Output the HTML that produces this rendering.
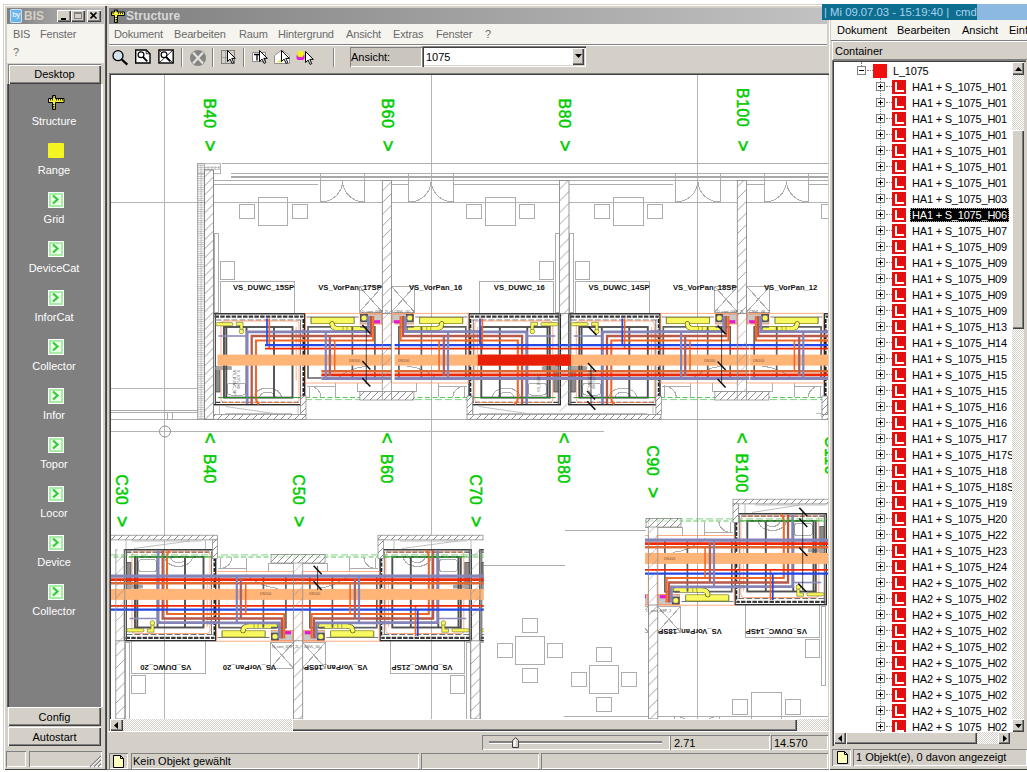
<!DOCTYPE html>
<html><head><meta charset="utf-8"><title>BIS Structure</title>
<style>
html,body{margin:0;padding:0;}
body{width:1027px;height:772px;position:relative;overflow:hidden;background:#fff;font-family:"Liberation Sans",sans-serif;font-size:11px;color:#000;}
.a{position:absolute;}
.t{position:absolute;white-space:nowrap;line-height:13px;height:13px;}
.face{background:#d4d0c8;}
.raised{box-shadow:inset 1px 1px 0 #fff,inset -1px -1px 0 #404040,inset -2px -2px 0 #808080;}
.sunk{box-shadow:inset 1px 1px 0 #808080,inset -1px -1px 0 #fff;}
.sunk2{box-shadow:inset 1px 1px 0 #808080,inset -1px -1px 0 #fff,inset 2px 2px 0 #404040,inset -2px -2px 0 #d4d0c8;}
.btn{position:absolute;background:#d4d0c8;box-shadow:inset 1px 1px 0 #fff,inset -1px -1px 0 #404040,inset -2px -2px 0 #808080;}
.dither{background-image:conic-gradient(#fff 25%,#d4d0c8 0 50%,#fff 0 75%,#d4d0c8 0);background-size:2px 2px;}
.mg{color:#6a6a6a;letter-spacing:-0.15px;}
.wl{color:#fff;text-align:center;width:92px;left:8px;}
.row{position:absolute;left:0;height:16px;width:178px;}
.pm{position:absolute;left:42px;top:3px;width:7px;height:7px;border:1px solid #808080;background:#fff;}
.pm:before{content:"";position:absolute;left:1px;top:3px;width:5px;height:1px;background:#000;}
.pm.p:after{content:"";position:absolute;left:3px;top:1px;width:1px;height:5px;background:#000;}
.li{position:absolute;left:58px;top:1px;width:14px;height:14px;background:#e41010;}
.li:before{content:"";position:absolute;left:3px;top:2px;width:2px;height:10px;background:#fff;}
.li:after{content:"";position:absolute;left:3px;top:10px;width:9px;height:2px;background:#fff;}
.lb{position:absolute;left:78px;top:1px;line-height:14px;height:14px;white-space:nowrap;padding:0 2px;letter-spacing:-0.2px;}
.sel{background:#000;color:#fff;outline:1px dotted #aaa;outline-offset:-1px;}
.gi{position:absolute;left:48px;width:16px;height:16px;background:#fff;}
.gi:before{content:"";position:absolute;left:1px;top:1px;width:10px;height:10px;border:2px solid #a8eca8;background:#e8ffe8;}
</style></head><body>

<div class="a face" style="left:3px;top:4px;width:104px;height:766px;box-shadow:inset 1px 1px 0 #d4d0c8,inset 2px 2px 0 #fff,inset -1px -1px 0 #404040,inset -2px -1px 0 #585858;"></div>
<div class="a " style="left:7px;top:8px;width:97px;height:16px;background:linear-gradient(90deg,#808080,#c0c0c0);"></div>
<div class="a " style="left:10px;top:9px;width:12px;height:14px;background:#6db4e8;border-radius:2px;box-shadow:inset 0 0 0 1px #c8e4fa;color:#fff;font-size:8px;line-height:12px;text-align:center;letter-spacing:-0.5px;">by</div>
<div class="t " style="left:24px;top:9.5px;font-weight:bold;font-size:12px;color:#d4d0c8;">BIS</div>
<div class="a btn" style="left:57px;top:10px;width:14px;height:12px;"></div>
<div class="a btn" style="left:71px;top:10px;width:14px;height:12px;"></div>
<div class="a btn" style="left:87px;top:10px;width:14px;height:12px;"></div>
<div class="a " style="left:61px;top:18px;width:5px;height:2px;background:#000;"></div>
<div class="a " style="left:74px;top:12px;width:8px;height:7px;box-sizing:border-box;border:1px solid #808080;border-top:2px solid #808080;"></div>
<svg class="a" style="left:90px;top:12px" width="8" height="8" viewBox="0 0 8 8"><path d="M0.5 0.5 L6.5 6.5 M6.5 0.5 L0.5 6.5" stroke="#000" stroke-width="1.6"/></svg>
<div class="a " style="left:7px;top:24px;width:97px;height:39px;background:#f5f4ee;"></div>
<div class="t mg" style="left:13px;top:28.0px;">BIS</div>
<div class="t mg" style="left:40px;top:28.0px;">Fenster</div>
<div class="t mg" style="left:13px;top:45.5px;">?</div>
<div class="a face" style="left:8px;top:64px;width:93px;height:20px;box-shadow:inset 1px 1px 0 #808080,inset 2px 2px 0 #fff,inset -1px -1px 0 #404040,inset -2px -2px 0 #808080;"></div>
<div class="t " style="left:8px;top:67.5px;width:93px;text-align:center;">Desktop</div>
<div class="a " style="left:7px;top:84px;width:96px;height:623px;background:#fff;"></div>
<div class="a " style="left:7px;top:84px;width:94px;height:623px;background:#808080;box-shadow:inset 1px 0 0 #606060,inset 2px 0 0 #404040;"></div>
<div class="t wl" style="left:8px;top:114.5px;">Structure</div>
<svg class="a" style="left:46px;top:92px" width="20" height="20" viewBox="0 0 20 20"><path d="M2.5 6.5 h4 v-3 h3 v3 h8.500 v4 h-8.500 v7 h-3 v-7 h-4 z" fill="#f4f040" stroke="#000" stroke-width="1"/><path d="M4.5 7v1.500M6.500 7v1.500M10.500 7v1.500M12.500 7v1.500M14.500 7v1.500M16.500 7v1.500M7 5h1.500M7 12.500h1.500M7 14.500h1.500M7 16h1.500" stroke="#000" stroke-width="0.8"/></svg>
<div class="t wl" style="left:8px;top:163.5px;">Range</div>
<div class="a " style="left:48px;top:143px;width:16px;height:15px;background:#f4f420;border-radius:1px;"></div>
<div class="t wl" style="left:8px;top:212.5px;">Grid</div>
<div class="gi" style="top:192px"></div><svg class="a" style="left:48px;top:192px" width="16" height="16" viewBox="0 0 16 16"><path d="M5 3.500 L9.500 7.500 L5 11.500" fill="none" stroke="#38c838" stroke-width="2.200"/></svg>
<div class="t wl" style="left:8px;top:261.5px;">DeviceCat</div>
<div class="gi" style="top:241px"></div><svg class="a" style="left:48px;top:241px" width="16" height="16" viewBox="0 0 16 16"><path d="M5 3.500 L9.500 7.500 L5 11.500" fill="none" stroke="#38c838" stroke-width="2.200"/></svg>
<div class="t wl" style="left:8px;top:310.5px;">InforCat</div>
<div class="gi" style="top:290px"></div><svg class="a" style="left:48px;top:290px" width="16" height="16" viewBox="0 0 16 16"><path d="M5 3.500 L9.500 7.500 L5 11.500" fill="none" stroke="#38c838" stroke-width="2.200"/></svg>
<div class="t wl" style="left:8px;top:359.5px;">Collector</div>
<div class="gi" style="top:339px"></div><svg class="a" style="left:48px;top:339px" width="16" height="16" viewBox="0 0 16 16"><path d="M5 3.500 L9.500 7.500 L5 11.500" fill="none" stroke="#38c838" stroke-width="2.200"/></svg>
<div class="t wl" style="left:8px;top:408.5px;">Infor</div>
<div class="gi" style="top:388px"></div><svg class="a" style="left:48px;top:388px" width="16" height="16" viewBox="0 0 16 16"><path d="M5 3.500 L9.500 7.500 L5 11.500" fill="none" stroke="#38c838" stroke-width="2.200"/></svg>
<div class="t wl" style="left:8px;top:457.5px;">Topor</div>
<div class="gi" style="top:437px"></div><svg class="a" style="left:48px;top:437px" width="16" height="16" viewBox="0 0 16 16"><path d="M5 3.500 L9.500 7.500 L5 11.500" fill="none" stroke="#38c838" stroke-width="2.200"/></svg>
<div class="t wl" style="left:8px;top:506.5px;">Locor</div>
<div class="gi" style="top:486px"></div><svg class="a" style="left:48px;top:486px" width="16" height="16" viewBox="0 0 16 16"><path d="M5 3.500 L9.500 7.500 L5 11.500" fill="none" stroke="#38c838" stroke-width="2.200"/></svg>
<div class="t wl" style="left:8px;top:555.5px;">Device</div>
<div class="gi" style="top:535px"></div><svg class="a" style="left:48px;top:535px" width="16" height="16" viewBox="0 0 16 16"><path d="M5 3.500 L9.500 7.500 L5 11.500" fill="none" stroke="#38c838" stroke-width="2.200"/></svg>
<div class="t wl" style="left:8px;top:604.5px;">Collector</div>
<div class="gi" style="top:584px"></div><svg class="a" style="left:48px;top:584px" width="16" height="16" viewBox="0 0 16 16"><path d="M5 3.500 L9.500 7.500 L5 11.500" fill="none" stroke="#38c838" stroke-width="2.200"/></svg>
<div class="a btn" style="left:8px;top:707px;width:93px;height:19px;"></div>
<div class="t " style="left:8px;top:710.8px;width:93px;text-align:center;">Config</div>
<div class="a btn" style="left:8px;top:727px;width:93px;height:19px;"></div>
<div class="t " style="left:8px;top:730.8px;width:93px;text-align:center;">Autostart</div>
<div class="a sunk" style="left:6px;top:751px;width:20px;height:16px;"></div>
<div class="a sunk" style="left:29px;top:751px;width:73px;height:16px;"></div>
<svg class="a" style="left:89px;top:755px" width="13" height="13" viewBox="0 0 13 13"><path d="M12 1 L1 12 M12 5 L5 12 M12 9 L9 12" stroke="#808080" stroke-width="1.200"/><path d="M12 2.200 L2.200 12 M12 6.200 L6.200 12 M12 10.200 L10.200 12" stroke="#fff" stroke-width="1"/></svg>
<div class="a face" style="left:107px;top:4px;width:723px;height:766px;box-shadow:inset 0 1px 0 #d4d0c8,inset 0 2px 0 #fff,inset -1px -1px 0 #808080;"></div>
<div class="a " style="left:109px;top:8px;width:718px;height:16px;background:linear-gradient(90deg,#808080,#c2c2c2);"></div>
<svg class="a" style="left:110px;top:8px" width="16" height="16" viewBox="0 0 16 16"><path d="M1.500 4 h3 v-2 h3 v2 h7 v3.500 h-7 v7 h-3 v-7 h-3 z" fill="#f4f040" stroke="#000" stroke-width="1"/><path d="M3 4.500v1.700M8.500 4.500v1.700M10.500 4.500v1.700M12.500 4.500v1.700M5.500 3h1.500M5.500 9.500h1.500M5.500 11.500h1.500M5.500 13h1.500" stroke="#000" stroke-width="0.800"/></svg>
<div class="t " style="left:126px;top:9.5px;font-weight:bold;font-size:12px;color:#d8d8d8;letter-spacing:0.1px;">Structure</div>
<div class="a " style="left:109px;top:24px;width:718px;height:20px;background:#f5f4ee;"></div>
<div class="t mg" style="left:114px;top:27.5px;">Dokument</div>
<div class="t mg" style="left:174px;top:27.5px;">Bearbeiten</div>
<div class="t mg" style="left:239px;top:27.5px;">Raum</div>
<div class="t mg" style="left:278px;top:27.5px;">Hintergrund</div>
<div class="t mg" style="left:346px;top:27.5px;">Ansicht</div>
<div class="t mg" style="left:393px;top:27.5px;">Extras</div>
<div class="t mg" style="left:436px;top:27.5px;">Fenster</div>
<div class="t mg" style="left:485px;top:27.5px;">?</div>
<div class="a " style="left:109px;top:44px;width:718px;height:1px;background:#808080;"></div>
<div class="a " style="left:109px;top:45px;width:718px;height:1px;background:#fff;"></div>
<svg class="a" style="left:108px;top:46px" width="240" height="27" viewBox="108 46 240 27">
<circle cx="118" cy="55.700" r="5" fill="#d8e4ec" stroke="#000" stroke-width="1.300"/><path d="M121.800 59.500 L127.300 64.600" stroke="#000" stroke-width="2.200"/>
<path d="M135.700 50 h10.500 l3.800 3.800 v9.200 h-14.300 z" fill="#fff" stroke="#000" stroke-width="1.400"/><path d="M146.200 50 v3.800 h3.800" fill="none" stroke="#000" stroke-width="0.800"/><circle cx="141" cy="54.800" r="2.900" fill="#fff" stroke="#000" stroke-width="1.200"/><path d="M143 57 L147.300 61.300" stroke="#000" stroke-width="1.800"/>
<rect x="158.900" y="50" width="14.300" height="13" fill="#fff" stroke="#000" stroke-width="1.400"/><path d="M159 50 L173 63 M173 50 L159 63" stroke="#000" stroke-width="0.800"/><circle cx="164" cy="54.800" r="2.900" fill="#fff" stroke="#000" stroke-width="1.200"/><path d="M166 57 L170.300 61.300" stroke="#000" stroke-width="1.800"/>
<path d="M181.500 48 v19" stroke="#808080"/><path d="M182.500 48 v19" stroke="#fff"/>
<circle cx="198" cy="58" r="8" fill="#858585"/><path d="M193 52.500 L203 63.500 M203 52.500 L193 63.500" stroke="#e4e2dc" stroke-width="2.200"/>
<path d="M212.500 48 v19" stroke="#808080"/><path d="M213.500 48 v19" stroke="#fff"/>
<rect x="221.500" y="50.500" width="13" height="13" fill="none" stroke="#808080"/><path d="M221.500 57.500 h6 M225.500 50.500 v13" stroke="#909090" stroke-width="0.800" fill="none"/>
<g id="cur"><path d="M227.500 50.500 v11 l2.600 -2.400 l2 4.300 l1.700 -0.800 l-2 -4.200 h3.500 z" fill="#fff" stroke="#000" stroke-width="1"/></g>
<path d="M243.500 48 v19" stroke="#808080"/><path d="M244.500 48 v19" stroke="#fff"/>
<rect x="252.500" y="52.500" width="13" height="9" fill="#fff" stroke="#909090"/><path d="M254 54.500 h6 M257 54.500 v6" stroke="#000" stroke-width="1.300"/>
<use href="#cur" x="32" y="0"/>
<path d="M274.500 63.500 v-8 l7.500 -5.500 l7.500 5.500 v8 z" fill="#fff" stroke="#909090"/><path d="M276 62.500 l6 -4 v4 z" fill="#e8e860"/>
<use href="#cur" x="54" y="0"/>
<rect x="296.500" y="54" width="8" height="6" rx="2" fill="#e020d0"/><circle cx="300.500" cy="54" r="3.300" fill="#f4f020"/>
<use href="#cur" x="78" y="1"/>
<path d="M333.500 48 v19" stroke="#808080"/><path d="M334.500 48 v19" stroke="#fff"/>
</svg>
<div class="a " style="left:350px;top:47px;width:72px;height:20px;background:#cac6be;box-shadow:inset 1px 1px 0 #808080,inset -1px -1px 0 #fff;"></div>
<div class="t " style="left:351px;top:50.5px;">Ansicht:</div>
<div class="a " style="left:422px;top:46px;width:164px;height:21px;background:#fff;box-shadow:inset 1px 1px 0 #808080,inset 2px 2px 0 #404040,inset -1px -1px 0 #fff,inset -2px -2px 0 #d4d0c8;"></div>
<div class="t " style="left:426px;top:50.5px;">1075</div>
<div class="a btn" style="left:572px;top:48px;width:12px;height:17px;"></div>
<svg class="a" style="left:575px;top:54px" width="7" height="4" viewBox="0 0 7 4"><path d="M0 0 h7 l-3.500 4 z" fill="#000"/></svg>
<div class="a " style="left:109px;top:73px;width:720px;height:660px;background:#d4d0c8;box-shadow:inset 1px 1px 0 #808080,inset 2px 2px 0 #404040;"></div>
<div class="a " style="left:111px;top:75px;width:717px;height:644px;background:#fff;"></div>
<svg class="a" style="left:111px;top:75px" width="717" height="644" viewBox="111 75 717 644" font-family="Liberation Sans, sans-serif">
<defs>
<pattern id="hw" width="11.7" height="11.7" patternUnits="userSpaceOnUse"><path d="M-1 12.700 L12.700 -1 M-1 1 L1 -1 M10.700 12.700 L12.700 10.700" stroke="#8a8a8a" stroke-width="0.800"/></pattern>
<pattern id="ho" width="9" height="9" patternUnits="userSpaceOnUse" patternTransform="translate(204.500 6)"><path d="M-1 10 L10 -1 M-1 1 L1 -1 M8 10 L10 8" stroke="#868686" stroke-width="0.800"/></pattern>
<pattern id="hb" width="7" height="7" patternUnits="userSpaceOnUse"><path d="M-1 8 L8 -1 M-1 1 L1 -1 M6 8 L8 6" stroke="#707070" stroke-width="0.8"/></pattern>
<pattern id="ins" width="3.5" height="2.2" patternUnits="userSpaceOnUse"><path d="M0 0.500 H3.500 M1.700 0 V2.200" stroke="#a0a0a0" stroke-width="0.6"/></pattern>
<g id="mod">
<g fill="none" stroke="#adadad" stroke-width="1" shape-rendering="crispEdges">
<rect x="6.500" y="281.500" width="74.300" height="32.300"/><rect x="6.500" y="261" width="14" height="18"/><rect x="0.500" y="233.500" width="4" height="78.500"/>
<rect x="45" y="197.200" width="29.300" height="28.700"/><rect x="25.500" y="204.300" width="15" height="14.500"/><rect x="78.700" y="204.300" width="15" height="14.500"/>
<rect x="14" y="383" width="18" height="12" rx="3"/><path d="M40 398 a14 10 0 0 1 28 0"/><path d="M46 398 a8 6 0 0 1 16 0"/>
</g>
<rect x="0" y="313.800" width="91.200" height="90.900" fill="none" stroke="#2a2a2a" stroke-width="1.400"/>
<path d="M1 316.600 H90" stroke="#383838" stroke-width="2.400" stroke-dasharray="4.500 1.200"/>
<path d="M2 320 H88" stroke="#707070" stroke-width="1" stroke-dasharray="6 2"/>
<path d="M2 402.300 H89" stroke="#404040" stroke-width="1.300" stroke-dasharray="5 1.500"/>
<path d="M89.800 319 V404" stroke="#202020" stroke-width="1.600" stroke-dasharray="4 1.300"/>
<path d="M87 320 V402" stroke="#686868" stroke-width="0.900"/><path d="M2 314 V404" stroke="#505050" stroke-width="1"/>
<rect x="2.200" y="366.300" width="4.300" height="25.700" fill="#8c8c8c" stroke="#404040" stroke-width="0.700"/><rect x="2" y="366" width="16.500" height="4" rx="1.500" fill="#a4a4a4"/>
<g fill="none" stroke="#505050" stroke-width="1.900"><rect x="10.500" y="327" width="68.500" height="70.600"/><path d="M12.800 327 V397.600 M60.500 327 V397.600 M33 327 V397.600"/></g>
<rect x="7.500" y="321" width="78" height="81.600" rx="3" fill="none" stroke="#ff9868" stroke-width="0.800"/><path d="M82.700 327 V380.500" stroke="#ffa070" stroke-width="0.800"/>
<path d="M5 336 H32.800" stroke="#8c8cbc" stroke-width="1.600"/>
<path d="M95 331.800 H33.700 V404" fill="none" stroke="#8484b8" stroke-width="2.700"/>
<path d="M95 336 H38.200 V404" fill="none" stroke="#b85848" stroke-width="2.300"/>
<path d="M95 340.500 H42.500 V398 Q42.500 402 45.500 404.500" fill="none" stroke="#f06828" stroke-width="2.100"/>
<path d="M4.500 397.600 H86.500" stroke="#209020" stroke-width="0.900"/>
<g fill="#f8f860" stroke="#505000" stroke-width="0.500"><rect x="2.200" y="322.600" width="17.300" height="3.200" rx="1.500"/><path d="M22.800 322.300 h6.700 v8 h-3 v-4.800 h-3.700 z"/><circle cx="27.900" cy="331.500" r="2.300"/></g>
</g>
<g id="vp">
<g fill="none" stroke="#adadad" stroke-width="1" shape-rendering="crispEdges">
<rect x="15.300" y="173.800" width="44.500" height="28.200"/><path d="M37.600 180.600 A22 21.400 0 0 1 15.300 202 M37.600 180.600 A22 21.400 0 0 0 59.800 202"/>
<rect x="54.400" y="286.500" width="22.900" height="25.500"/><path d="M54.400 286.500 L77.300 312 M77.300 286.500 L54.400 312"/>
<path d="M2 386 H30 M4 386 V397 M4 386 A12 12 0 0 1 16 397 M30 383 V397"/><path d="M30 380 Q44 368 62 366" /><path d="M52 383 V391.500 M52 391.500 H77"/>
</g>
<rect x="0.600" y="313.300" width="77" height="69.700" fill="none" stroke="#ff9868" stroke-width="0.800"/>
<path d="M1.500 317 H53.500 M6 317 V323.500 M49 317 V323.500" stroke="#606060" stroke-width="0.800" fill="none"/>
<rect x="6.200" y="317.500" width="42.800" height="6.200" fill="#f8f860" stroke="#707000" stroke-width="0.600"/>
<path d="M27 323.700 Q27 328.500 33.500 328.500 H59.500" fill="none" stroke="#404000" stroke-width="5" stroke-linecap="round"/><path d="M27 323.700 Q27 328.500 33.500 328.500 H59.500" fill="none" stroke="#f8f860" stroke-width="3.900" stroke-linecap="round"/><path d="M38 326.400 v4.200 M42 326.400 v4.200 M47 326.400 v4.200" stroke="#606000" stroke-width="0.500"/>
<g fill="none" stroke="#606060" stroke-width="1.700"><path d="M26 326.800 H3 V378 H16.300"/><path d="M47.400 327 V379 M69.900 326 V379"/><path d="M55 326.800 H70"/></g>
<rect x="55.200" y="314" width="21.500" height="10" fill="#c8c8c8" stroke="#ff8850" stroke-width="0.800"/>
<rect x="55.700" y="314.600" width="6.600" height="6.800" fill="#707070" stroke="#202020" stroke-width="0.600"/><circle cx="59" cy="318" r="2.500" fill="#f8f860"/>
<rect x="68.500" y="320.200" width="6.500" height="3.200" fill="#e818d0"/>
<path d="M-10 331.700 H63.400 V316" fill="none" stroke="#8484b8" stroke-width="2.700"/>
<path d="M-10 336 H65.900 V316" fill="none" stroke="#b85848" stroke-width="2.300"/>
<path d="M-10 340.500 H68.200 V316" fill="none" stroke="#f06828" stroke-width="2.100"/>
</g>
<g id="vpv">
<path d="M20.800 331.600 V378.500" stroke="#8484b8" stroke-width="2.200"/><path d="M24.900 336 V376" stroke="#8484b8" stroke-width="2.400"/><path d="M24.900 336 V376" stroke="#b85848" stroke-width="1.400"/><path d="M29.700 340.400 V371.500" stroke="#f06828" stroke-width="1.600"/>
</g>
<g id="feed"><path d="M0 318.500 V345" stroke="#2448e8" stroke-width="1.700"/><path d="M2.300 318.500 V348.400" stroke="#f06828" stroke-width="1.700"/></g>
<g id="tick"><path d="M-4 -4.300 L4 4.300" stroke="#101010" stroke-width="1.500"/></g>
<g id="half"><use href="#mod" x="213.500"/><use href="#vp" x="305"/></g>
<g id="halfv"><use href="#vpv" x="305"/></g>
<g id="strip"><use href="#half"/><use href="#half" transform="translate(773.8 0) scale(-1 1)"/><use href="#half" x="355.300"/><use href="#half" transform="translate(1129.1 0) scale(-1 1)"/></g>
<g id="stripv"><use href="#halfv"/><use href="#halfv" transform="translate(773.8 0) scale(-1 1)"/><use href="#halfv" x="355.300"/><use href="#halfv" transform="translate(1129.1 0) scale(-1 1)"/>
</g>
<g id="thruA">
<path d="M0 345 H1300" stroke="#2448e8" stroke-width="2.250"/><path d="M0 348.600 H1300" stroke="#f02808" stroke-width="1.900"/>
</g>
<g id="thruB">
<path d="M0 371.300 H1300" stroke="#e06830" stroke-width="2.400"/><path d="M0 374.900 H1300" stroke="#f02808" stroke-width="2.700"/><path d="M0 378.400 H1300" stroke="#8484b8" stroke-width="3.200"/>
</g>
<g id="band"><rect x="0" y="354.600" width="1300" height="11" fill="#ffb478"/></g>
<g id="green"><path d="M0 397.500 H1300" stroke="#48c048" stroke-width="0.900" stroke-dasharray="5 2.500"/><path d="M0 399.600 H1300" stroke="#60c860" stroke-width="0.800" stroke-dasharray="7 3"/></g>
<clipPath id="cU"><rect x="110" y="75" width="718" height="350"/></clipPath>
<clipPath id="cL"><rect x="199" y="230" width="373.800" height="210"/></clipPath>
<clipPath id="cR"><rect x="379" y="190" width="200" height="240"/></clipPath>
<clipPath id="cLs"><rect x="199" y="180" width="373.800" height="260"/></clipPath>
</defs>
<g stroke="#b4b4b4" stroke-width="1" fill="none">
<path d="M164.500 75 V719 M431.500 75 V719 M697.500 75 V719"/><path d="M110 202.500 H828"/><path d="M110 431.500 H604"/><path d="M110 388.500 H198"/>
<circle cx="165" cy="431.500" r="5.500" stroke="#909090"/>
</g>
<g stroke="#adadad" stroke-width="1" shape-rendering="crispEdges" fill="none">
<path d="M110 410.500 H198 M110 412.500 H198 M110 419 H198 M167 412.500 V419 M172 412.500 V419"/>
<path d="M222 163.700 H828"/>
<path d="M198 419.300 H828"/>
<path d="M231 173.500 H828 M213.500 180.600 H828 M213.500 184.300 H318"/><path d="M231 177 H828" stroke-width="1.600" stroke="#a8a8a8"/>
<path d="M569 184.300 H673 M391.500 184.300 H409 M454 184.300 H559.500 M746.500 184.300 H764 M809 184.300 H828"/>
<path d="M564.500 530 H646 M481 565.300 H564.500 M564 716.800 H828"/>
</g>
<g clip-path="url(#cU)">
<use href="#strip"/>
<path d="M305 397.500 H468 M660 397.500 H828" stroke="#48c048" stroke-width="0.900" stroke-dasharray="5 2.500"/><path d="M305 399.600 H468 M660 399.600 H828" stroke="#60c860" stroke-width="0.800" stroke-dasharray="7 3"/>
</g>
<use href="#feed" x="267"/>
<use href="#feed" x="480"/>
<use href="#feed" x="622.3"/>
<path d="M265 345 H828" stroke="#2448e8" stroke-width="2.250"/><path d="M265 348.600 H828" stroke="#f02808" stroke-width="1.900"/>
<path d="M321.400 371.300 H828" stroke="#e06830" stroke-width="2.400"/><path d="M321.400 374.900 H828" stroke="#f02808" stroke-width="2.700"/><path d="M321.400 378.400 H828" stroke="#8484b8" stroke-width="3.200"/>
<rect x="217.500" y="354.600" width="611" height="11" fill="#ffb478"/>
<rect x="477.800" y="354.600" width="93.200" height="11" fill="#e82008"/>
<g clip-path="url(#cU)"><use href="#stripv"/></g>
<rect x="392" y="323" width="2.600" height="57" fill="#fff"/><path d="M749.700 323 V380" stroke="#fff" stroke-width="0.800" stroke-dasharray="6 1.500"/>
<g transform="translate(-89 954.500) scale(1 -1)"><g clip-path="url(#cLs)"><use href="#strip"/><use href="#green"/><use href="#feed" transform="translate(506.800 0) scale(-1 1)"/><use href="#thruA"/><use href="#thruB"/><use href="#band"/><use href="#stripv"/></g></g>
<g transform="translate(266 918.500) scale(1 -1)"><g clip-path="url(#cR)"><use href="#strip"/><use href="#green"/><use href="#feed" transform="translate(506.800 0) scale(-1 1)"/><use href="#thruA"/><use href="#thruB"/><use href="#band"/><use href="#stripv"/></g></g>
<rect x="197.500" y="163.700" width="23" height="10" fill="#fff" stroke="#a0a0a0" stroke-width="0.800"/>
<rect x="197.500" y="163.700" width="7" height="255.600" fill="url(#ins)" stroke="#a0a0a0" stroke-width="0.800"/><rect x="204.500" y="166" width="16" height="4" fill="url(#ins)"/>
<rect x="204.500" y="170" width="9" height="249.300" fill="#fff"/><rect x="204.500" y="170" width="9" height="249.300" fill="url(#ho)" stroke="#707070" stroke-width="0.800"/>
<rect x="213.5" y="414.6" width="92.5" height="4.7" fill="#fff"/><rect x="213.5" y="414.6" width="92.5" height="4.7" fill="url(#hb)" stroke="#808080" stroke-width="0.700"/>
<path d="M219.5 405.500 V414.600 M298 405.500 V414.600 M225.5 406.500 L273.5 413.500 M225.5 413.500 H292" stroke="#adadad" stroke-width="0.800" fill="none"/>
<rect x="467" y="414.6" width="194.0" height="4.7" fill="#fff"/><rect x="467" y="414.6" width="194.0" height="4.7" fill="url(#hb)" stroke="#808080" stroke-width="0.700"/>
<path d="M473 405.500 V414.600 M653 405.500 V414.600 M479 406.500 L527 413.500 M479 413.500 H647" stroke="#adadad" stroke-width="0.800" fill="none"/>
<rect x="822" y="414.6" width="8.0" height="4.7" fill="#fff"/><rect x="822" y="414.6" width="8.0" height="4.7" fill="url(#hb)" stroke="#808080" stroke-width="0.700"/>
<path d="M828 405.500 V414.600 M822 405.500 V414.600 M834 406.500 L882 413.500 M834 413.500 H816" stroke="#adadad" stroke-width="0.800" fill="none"/>
<rect x="300.6" y="396" width="5.4" height="18.6" fill="#fff"/><rect x="300.6" y="396" width="5.4" height="18.6" fill="url(#hb)" stroke="#808080" stroke-width="0.700"/>
<rect x="467" y="396" width="5.4" height="18.6" fill="#fff"/><rect x="467" y="396" width="5.4" height="18.6" fill="url(#hb)" stroke="#808080" stroke-width="0.700"/>
<rect x="655.9" y="396" width="5.4" height="18.6" fill="#fff"/><rect x="655.9" y="396" width="5.4" height="18.6" fill="url(#hb)" stroke="#808080" stroke-width="0.700"/>
<rect x="822" y="396" width="5.4" height="18.6" fill="#fff"/><rect x="822" y="396" width="5.4" height="18.6" fill="url(#hb)" stroke="#808080" stroke-width="0.700"/>
<rect x="359.9" y="391.5" width="54.0" height="8.5" fill="#fff"/><rect x="359.9" y="391.5" width="54.0" height="8.5" fill="url(#hb)" stroke="#808080" stroke-width="0.700"/>
<rect x="714.9" y="391.5" width="54.0" height="8.5" fill="#fff"/><rect x="714.9" y="391.5" width="54.0" height="8.5" fill="url(#hb)" stroke="#808080" stroke-width="0.700"/>
<rect x="382.3" y="180.6" width="9.2" height="132.9" fill="#fff"/><rect x="382.3" y="180.6" width="9.2" height="132.9" fill="url(#hw)" stroke="#808080" stroke-width="0.800"/>
<path d="M382.3 313.500 V400 M391.5 313.500 V400" stroke="#909090" stroke-width="0.800"/>
<rect x="559.5" y="180.6" width="9.5" height="132.9" fill="#fff"/><rect x="559.5" y="180.6" width="9.5" height="132.9" fill="url(#hw)" stroke="#808080" stroke-width="0.800"/>
<path d="M559.5 313.500 V400 M569 313.500 V400" stroke="#909090" stroke-width="0.800"/>
<rect x="737.3" y="180.6" width="9.2" height="132.9" fill="#fff"/><rect x="737.3" y="180.6" width="9.2" height="132.9" fill="url(#hw)" stroke="#808080" stroke-width="0.800"/>
<path d="M737.3 313.500 V400 M746.5 313.500 V400" stroke="#909090" stroke-width="0.800"/>
<rect x="115.8" y="640.8" width="9.0" height="78.2" fill="#fff"/><rect x="115.8" y="640.8" width="9.0" height="78.2" fill="url(#hw)" stroke="#808080" stroke-width="0.800"/>
<path d="M115.8 549 V640.800 M124.8 549 V640.800" stroke="#909090" stroke-width="0.800"/>
<rect x="293.4" y="640.8" width="9.3" height="78.2" fill="#fff"/><rect x="293.4" y="640.8" width="9.3" height="78.2" fill="url(#hw)" stroke="#808080" stroke-width="0.800"/>
<path d="M293.4 558 V640.800 M302.7 558 V640.800" stroke="#909090" stroke-width="0.800"/>
<rect x="470.8" y="640.8" width="9.2" height="78.2" fill="#fff"/><rect x="470.8" y="640.8" width="9.2" height="78.2" fill="url(#hw)" stroke="#808080" stroke-width="0.800"/>
<path d="M470.8 549 V640.800 M480 549 V640.800" stroke="#909090" stroke-width="0.800"/>
<rect x="648.4" y="605" width="9.4" height="114.0" fill="#fff"/><rect x="648.4" y="605" width="9.4" height="114.0" fill="url(#hw)" stroke="#808080" stroke-width="0.800"/>
<path d="M648.400 518 V605 M657.800 518 V605" stroke="#909090" stroke-width="0.800"/>
<rect x="110" y="535.2" width="107.5" height="4.7" fill="#fff"/><rect x="110" y="535.2" width="107.5" height="4.7" fill="url(#hb)" stroke="#808080" stroke-width="0.700"/>
<path d="M126 539.900 V549 M205.5 539.900 V549 M132 541 H201.5 M190 541 L134 548.500" stroke="#adadad" stroke-width="0.800" fill="none"/>
<rect x="378" y="535.2" width="105.0" height="4.7" fill="#fff"/><rect x="378" y="535.2" width="105.0" height="4.7" fill="url(#hb)" stroke="#808080" stroke-width="0.700"/>
<path d="M394 539.900 V549 M471 539.900 V549 M400 541 H467 M458 541 L402 548.500" stroke="#adadad" stroke-width="0.800" fill="none"/>
<rect x="212.5" y="539.9" width="5.0" height="18.6" fill="#fff"/><rect x="212.5" y="539.9" width="5.0" height="18.6" fill="url(#hb)" stroke="#808080" stroke-width="0.700"/>
<rect x="378" y="539.9" width="5.4" height="18.6" fill="#fff"/><rect x="378" y="539.9" width="5.4" height="18.6" fill="url(#hb)" stroke="#808080" stroke-width="0.700"/>
<rect x="733" y="499.2" width="97.0" height="4.7" fill="#fff"/><rect x="733" y="499.2" width="97.0" height="4.7" fill="url(#hb)" stroke="#808080" stroke-width="0.700"/>
<rect x="733" y="503.9" width="5.4" height="18.6" fill="#fff"/><rect x="733" y="503.9" width="5.4" height="18.6" fill="url(#hb)" stroke="#808080" stroke-width="0.700"/>
<path d="M745 503.900 V513 M755 505 H826 M800 505 L752 512.500" stroke="#adadad" stroke-width="0.800" fill="none"/>
<rect x="271" y="554.5" width="54.0" height="8.5" fill="#fff" fill-opacity="0.550"/><rect x="271" y="554.5" width="54.0" height="8.5" fill="url(#hb)" stroke="#808080" stroke-width="0.700"/>
<rect x="646" y="518.5" width="35.0" height="8.5" fill="#fff" fill-opacity="0.550"/><rect x="646" y="518.5" width="35.0" height="8.5" fill="url(#hb)" stroke="#808080" stroke-width="0.700"/>
<rect x="293.4" y="563" width="9.3" height="77.8" fill="url(#hw)" opacity="0.7"/>
<rect x="470.8" y="549" width="9.2" height="91.8" fill="url(#hw)" opacity="0.7"/>
<rect x="648.4" y="527" width="9.4" height="78.0" fill="url(#hw)" opacity="0.7"/>
<rect x="115.8" y="549" width="9.0" height="91.8" fill="url(#hw)" opacity="0.7"/>
<rect x="382.3" y="313.5" width="9.2" height="78.0" fill="url(#hw)" opacity="0.7"/>
<rect x="559.5" y="313.5" width="9.5" height="101.1" fill="url(#hw)" opacity="0.7"/>
<rect x="737.3" y="313.5" width="9.2" height="78.0" fill="url(#hw)" opacity="0.7"/>
<rect x="555" y="354.600" width="16" height="11" fill="#e82008"/>
<use href="#tick" x="366.3" y="329.3"/>
<use href="#tick" x="366.3" y="365.3"/>
<use href="#tick" x="366.3" y="382.3"/>
<use href="#tick" x="721.6" y="329.8"/>
<use href="#tick" x="721.6" y="365.8"/>
<use href="#tick" x="721.6" y="383.2"/>
<use href="#tick" x="592.5" y="331"/>
<use href="#tick" x="592" y="367.4"/>
<use href="#tick" x="591" y="395.2"/>
<use href="#tick" x="591.3" y="405.5"/>
<use href="#tick" x="317.6" y="570"/>
<use href="#tick" x="317.6" y="585.6"/>
<use href="#tick" x="803.3" y="512"/>
<use href="#tick" x="803.3" y="522.7"/>
<use href="#tick" x="803.3" y="551.8"/>
<use href="#tick" x="802.3" y="587.8"/>
<path d="M366.300 327 V384 M721.600 327 V384 M591 367 V405 M802.700 512 V590 M317.600 566 V590" stroke="#101010" stroke-width="0.700"/>
<g fill="#fff" stroke="#adadad" stroke-width="1" shape-rendering="crispEdges">
<rect x="515.2" y="636" width="29.100" height="28.700"/><rect x="522.3" y="618" width="14.700" height="14.700"/><rect x="522.3" y="668" width="14.700" height="14.700"/><rect x="497.0" y="643" width="15.500" height="14.700"/><rect x="547.0" y="643" width="15" height="14.700"/>
<rect x="589.6" y="665" width="29.100" height="28.700"/><rect x="596.7" y="647" width="14.700" height="14.700"/><rect x="596.7" y="697" width="14.700" height="14.700"/><rect x="571.4" y="672" width="15.500" height="14.700"/><rect x="621.4" y="672" width="15" height="14.700"/>
</g>
<g font-size="3.600" fill="#505050">
<text x="361.5" y="313">O_cont_0lSP_2L</text>
<text x="716.8" y="313">O_cont_0lSP_2L</text>
<text x="394" y="313">CNVL_0lL_2</text>
<text x="749.3" y="313">CNVL_0lL_2</text>
<text transform="translate(233 370) rotate(90)">VS_DUWC_SP</text><text transform="translate(236.5 370) rotate(90)">S_1075_H0</text>
<text transform="translate(588.3 370) rotate(90)">VS_DUWC_SP</text><text transform="translate(591.8 370) rotate(90)">S_1075_H0</text>
<text transform="translate(540 392) rotate(-90)">VS_DUWC</text><text x="272" y="647.500">O_cont_0lSP_2L</text><text x="304" y="647.500">CNVL_0lL</text><text x="646" y="612">O_cont_0lSP_2</text>
<text x="349" y="361.5" fill="#7a5030">DN100</text>
<text x="398" y="361.5" fill="#7a5030">DN100</text>
<text x="704" y="361.5" fill="#7a5030">DN100</text>
<text x="753" y="361.5" fill="#7a5030">DN100</text>
<text x="260" y="595" fill="#7a5030">DN100</text>
<text x="309" y="595" fill="#7a5030">DN100</text>
<text x="664" y="560" fill="#7a5030">DN100</text>
</g>
<g font-size="7.650" font-weight="bold" fill="#101010">
<text x="233" y="289.600">VS_DUWC_15SP</text>
<text x="318.2" y="289.600">VS_VorPan_17SP</text>
<text x="409" y="289.600">VS_VorPan_16</text>
<text x="493.8" y="289.600">VS_DUWC_16</text>
<text x="588.5" y="289.600">VS_DUWC_14SP</text>
<text x="673" y="289.600">VS_VorPan_18SP</text>
<text x="764" y="289.600">VS_VorPan_12</text>
<text transform="translate(191.3 664.9) rotate(180)">VS_DUWC_20</text>
<text transform="translate(276 664.9) rotate(180)">VS_VorPan_20</text>
<text transform="translate(367.5 664.9) rotate(180)">VS_VorPan_16SP</text>
<text transform="translate(452.6 664.9) rotate(180)">VS_DUWC_21SP</text>
<text transform="translate(721.8 628.9) rotate(180)">VS_VorPan_18SP</text>
<text transform="translate(806.9 628.9) rotate(180)">VS_DUWC_14SP</text>
</g>
<g font-size="15.700" fill="#00cc00" stroke="#00cc00" stroke-width="0.500" letter-spacing="0.700">
<text transform="translate(204.2 98.6) rotate(90)">B40</text>
<text transform="translate(381.7 98.6) rotate(90)">B60</text>
<text transform="translate(559.2 98.6) rotate(90)">B80</text>
<text transform="translate(736.5 88) rotate(90)">B100</text>
<text transform="translate(204 454) rotate(90)">B40</text>
<text transform="translate(381 454) rotate(90)">B60</text>
<text transform="translate(558.3 454) rotate(90)">B80</text>
<text transform="translate(735.8 453.6) rotate(90)">B100</text>
<text transform="translate(115.7 474.6) rotate(90)">C30</text>
<text transform="translate(292.7 474.6) rotate(90)">C50</text>
<text transform="translate(470.3 474.6) rotate(90)">C70</text>
<text transform="translate(647.3 445.5) rotate(90)">C90</text>
<text transform="translate(825.3 436) rotate(90)">C110</text>
</g><g font-size="19" fill="#00cc00" stroke="#00cc00" stroke-width="0.600">
<text transform="translate(204.2 140.300) rotate(90)">&gt;</text>
<text transform="translate(381.7 140.300) rotate(90)">&gt;</text>
<text transform="translate(559.2 140.300) rotate(90)">&gt;</text>
<text transform="translate(736.5 140.300) rotate(90)">&gt;</text>
<text transform="translate(204 432.400) rotate(90)">&lt;</text>
<text transform="translate(381 432.400) rotate(90)">&lt;</text>
<text transform="translate(558.3 432.400) rotate(90)">&lt;</text>
<text transform="translate(735.8 432.400) rotate(90)">&lt;</text>
<text transform="translate(115.7 516) rotate(90)">&gt;</text>
<text transform="translate(292.7 516) rotate(90)">&gt;</text>
<text transform="translate(470.3 516) rotate(90)">&gt;</text>
<text transform="translate(647.3 487) rotate(90)">&gt;</text>
</g>
</svg>
<div class="a dither" style="left:110px;top:719px;width:718px;height:12px;"></div>
<div class="a btn" style="left:110px;top:719px;width:13px;height:12px;"></div>
<svg class="a" style="left:114px;top:722px" width="4" height="7" viewBox="0 0 4 7"><path d="M4 0 v7 l-4 -3.500 z" fill="#000"/></svg>
<div class="a btn" style="left:292px;top:719px;width:505px;height:12px;"></div>
<div class="a " style="left:108px;top:731px;width:721px;height:2px;background:#d4d0c8;"></div>
<div class="a " style="left:108px;top:731px;width:721px;height:1px;background:#fff;"></div>
<div class="a sunk" style="left:482px;top:735px;width:188px;height:15px;"></div>
<div class="a " style="left:489px;top:741px;width:173px;height:2px;background:#808080;box-shadow:0 1px 0 #fff;"></div>
<svg class="a" style="left:512px;top:737px" width="7" height="11" viewBox="0 0 7 11"><path d="M0.500 3.500 L3.500 0.500 L6.500 3.500 V10.500 H0.500 Z" fill="#d4d0c8" stroke="#404040" stroke-width="1"/><path d="M1.500 3.700 L3.500 1.700 V9.500 H1.500 Z" fill="#fff"/></svg>
<div class="a sunk" style="left:670px;top:735px;width:100px;height:15px;"></div>
<div class="t " style="left:674px;top:736.5px;">2.71</div>
<div class="a sunk" style="left:771px;top:735px;width:57px;height:15px;"></div>
<div class="t " style="left:774px;top:736.5px;">14.570</div>
<div class="a sunk" style="left:109px;top:753px;width:19px;height:16px;"></div>
<svg class="a" style="left:112px;top:755px" width="13" height="13" viewBox="0 0 13 13"><path d="M1.500 0.500 h7 l3 3 v9 h-10 z" fill="#ffffc0" stroke="#000"/><path d="M8.500 0.500 v3 h3" fill="none" stroke="#000"/></svg>
<div class="a sunk" style="left:131px;top:753px;width:288px;height:16px;"></div>
<div class="t " style="left:133px;top:755.0px;">Kein Objekt gewählt</div>
<div class="a sunk" style="left:421px;top:753px;width:118px;height:16px;"></div>
<div class="a sunk" style="left:541px;top:753px;width:287px;height:16px;"></div>
<div class="a " style="left:822px;top:4px;width:205px;height:16px;background:linear-gradient(90deg,#0e6e90 0,#0e6e90 155px,#8cb9e1 155px,#8cb9e1 205px);"></div>
<div class="t " style="left:824px;top:5.5px;color:#a8d4f0;font-size:11.300px;">| Mi 09.07.03 - 15:19:40 |&nbsp; cmd</div>
<div class="a face" style="left:829px;top:20px;width:198px;height:750px;box-shadow:inset 1px 0 0 #fff,inset 0 -1px 0 #404040;"></div>
<div class="a " style="left:831px;top:20px;width:196px;height:20px;background:#f5f4ee;"></div>
<div class="t " style="left:837px;top:23.5px;">Dokument</div>
<div class="t " style="left:897px;top:23.5px;">Bearbeiten</div>
<div class="t " style="left:962px;top:23.5px;">Ansicht</div>
<div class="t " style="left:1009px;top:23.5px;">Einf</div>
<div class="a " style="left:831px;top:40px;width:196px;height:1px;background:#808080;"></div>
<div class="a face" style="left:832px;top:41px;width:195px;height:19px;box-shadow:inset 1px 1px 0 #fff,inset 0 -1px 0 #808080;"></div>
<div class="t " style="left:835px;top:44.5px;">Container</div>
<div class="a " style="left:832px;top:60px;width:194px;height:686px;background:#d4d0c8;box-shadow:inset 1px 1px 0 #808080,inset 2px 2px 0 #404040;"></div>
<div class="a" style="left:834px;top:62px;width:178px;height:670px;background:#fff;overflow:hidden;"><div class="a" style="left:27px;top:0;width:0;height:6px;border-left:1px dotted #808080;"></div><div class="a" style="left:46px;top:16px;width:0;height:660px;border-left:1px dotted #808080;"></div><div class="row" style="top:1px"><div class="pm" style="left:23px"></div><div class="a" style="left:33px;top:7px;width:6px;border-top:1px dotted #808080;"></div><div class="a" style="left:39px;top:1px;width:14px;height:14px;background:#f01010;"></div><div class="lb" style="left:57px">L_1075</div></div><div class="row" style="top:17px"><div class="pm p"></div><div class="a" style="left:52px;top:7px;width:6px;border-top:1px dotted #808080;"></div><div class="li"></div><div class="lb" style="left:76px">HA1 + S_1075_H01</div></div><div class="row" style="top:33px"><div class="pm p"></div><div class="a" style="left:52px;top:7px;width:6px;border-top:1px dotted #808080;"></div><div class="li"></div><div class="lb" style="left:76px">HA1 + S_1075_H01</div></div><div class="row" style="top:49px"><div class="pm p"></div><div class="a" style="left:52px;top:7px;width:6px;border-top:1px dotted #808080;"></div><div class="li"></div><div class="lb" style="left:76px">HA1 + S_1075_H01</div></div><div class="row" style="top:65px"><div class="pm p"></div><div class="a" style="left:52px;top:7px;width:6px;border-top:1px dotted #808080;"></div><div class="li"></div><div class="lb" style="left:76px">HA1 + S_1075_H01</div></div><div class="row" style="top:81px"><div class="pm p"></div><div class="a" style="left:52px;top:7px;width:6px;border-top:1px dotted #808080;"></div><div class="li"></div><div class="lb" style="left:76px">HA1 + S_1075_H01</div></div><div class="row" style="top:97px"><div class="pm p"></div><div class="a" style="left:52px;top:7px;width:6px;border-top:1px dotted #808080;"></div><div class="li"></div><div class="lb" style="left:76px">HA1 + S_1075_H01</div></div><div class="row" style="top:113px"><div class="pm p"></div><div class="a" style="left:52px;top:7px;width:6px;border-top:1px dotted #808080;"></div><div class="li"></div><div class="lb" style="left:76px">HA1 + S_1075_H01</div></div><div class="row" style="top:129px"><div class="pm p"></div><div class="a" style="left:52px;top:7px;width:6px;border-top:1px dotted #808080;"></div><div class="li"></div><div class="lb" style="left:76px">HA1 + S_1075_H03</div></div><div class="row" style="top:145px"><div class="pm p"></div><div class="a" style="left:52px;top:7px;width:6px;border-top:1px dotted #808080;"></div><div class="li"></div><div class="lb sel" style="left:76px">HA1 + S_1075_H06</div></div><div class="row" style="top:161px"><div class="pm p"></div><div class="a" style="left:52px;top:7px;width:6px;border-top:1px dotted #808080;"></div><div class="li"></div><div class="lb" style="left:76px">HA1 + S_1075_H07</div></div><div class="row" style="top:177px"><div class="pm p"></div><div class="a" style="left:52px;top:7px;width:6px;border-top:1px dotted #808080;"></div><div class="li"></div><div class="lb" style="left:76px">HA1 + S_1075_H09</div></div><div class="row" style="top:193px"><div class="pm p"></div><div class="a" style="left:52px;top:7px;width:6px;border-top:1px dotted #808080;"></div><div class="li"></div><div class="lb" style="left:76px">HA1 + S_1075_H09</div></div><div class="row" style="top:209px"><div class="pm p"></div><div class="a" style="left:52px;top:7px;width:6px;border-top:1px dotted #808080;"></div><div class="li"></div><div class="lb" style="left:76px">HA1 + S_1075_H09</div></div><div class="row" style="top:225px"><div class="pm p"></div><div class="a" style="left:52px;top:7px;width:6px;border-top:1px dotted #808080;"></div><div class="li"></div><div class="lb" style="left:76px">HA1 + S_1075_H09</div></div><div class="row" style="top:241px"><div class="pm p"></div><div class="a" style="left:52px;top:7px;width:6px;border-top:1px dotted #808080;"></div><div class="li"></div><div class="lb" style="left:76px">HA1 + S_1075_H09</div></div><div class="row" style="top:257px"><div class="pm p"></div><div class="a" style="left:52px;top:7px;width:6px;border-top:1px dotted #808080;"></div><div class="li"></div><div class="lb" style="left:76px">HA1 + S_1075_H13</div></div><div class="row" style="top:273px"><div class="pm p"></div><div class="a" style="left:52px;top:7px;width:6px;border-top:1px dotted #808080;"></div><div class="li"></div><div class="lb" style="left:76px">HA1 + S_1075_H14</div></div><div class="row" style="top:289px"><div class="pm p"></div><div class="a" style="left:52px;top:7px;width:6px;border-top:1px dotted #808080;"></div><div class="li"></div><div class="lb" style="left:76px">HA1 + S_1075_H15</div></div><div class="row" style="top:305px"><div class="pm p"></div><div class="a" style="left:52px;top:7px;width:6px;border-top:1px dotted #808080;"></div><div class="li"></div><div class="lb" style="left:76px">HA1 + S_1075_H15</div></div><div class="row" style="top:321px"><div class="pm p"></div><div class="a" style="left:52px;top:7px;width:6px;border-top:1px dotted #808080;"></div><div class="li"></div><div class="lb" style="left:76px">HA1 + S_1075_H15</div></div><div class="row" style="top:337px"><div class="pm p"></div><div class="a" style="left:52px;top:7px;width:6px;border-top:1px dotted #808080;"></div><div class="li"></div><div class="lb" style="left:76px">HA1 + S_1075_H16</div></div><div class="row" style="top:353px"><div class="pm p"></div><div class="a" style="left:52px;top:7px;width:6px;border-top:1px dotted #808080;"></div><div class="li"></div><div class="lb" style="left:76px">HA1 + S_1075_H16</div></div><div class="row" style="top:369px"><div class="pm p"></div><div class="a" style="left:52px;top:7px;width:6px;border-top:1px dotted #808080;"></div><div class="li"></div><div class="lb" style="left:76px">HA1 + S_1075_H17</div></div><div class="row" style="top:385px"><div class="pm p"></div><div class="a" style="left:52px;top:7px;width:6px;border-top:1px dotted #808080;"></div><div class="li"></div><div class="lb" style="left:76px">HA1 + S_1075_H17SP</div></div><div class="row" style="top:401px"><div class="pm p"></div><div class="a" style="left:52px;top:7px;width:6px;border-top:1px dotted #808080;"></div><div class="li"></div><div class="lb" style="left:76px">HA1 + S_1075_H18</div></div><div class="row" style="top:417px"><div class="pm p"></div><div class="a" style="left:52px;top:7px;width:6px;border-top:1px dotted #808080;"></div><div class="li"></div><div class="lb" style="left:76px">HA1 + S_1075_H18SP</div></div><div class="row" style="top:433px"><div class="pm p"></div><div class="a" style="left:52px;top:7px;width:6px;border-top:1px dotted #808080;"></div><div class="li"></div><div class="lb" style="left:76px">HA1 + S_1075_H19</div></div><div class="row" style="top:449px"><div class="pm p"></div><div class="a" style="left:52px;top:7px;width:6px;border-top:1px dotted #808080;"></div><div class="li"></div><div class="lb" style="left:76px">HA1 + S_1075_H20</div></div><div class="row" style="top:465px"><div class="pm p"></div><div class="a" style="left:52px;top:7px;width:6px;border-top:1px dotted #808080;"></div><div class="li"></div><div class="lb" style="left:76px">HA1 + S_1075_H22</div></div><div class="row" style="top:481px"><div class="pm p"></div><div class="a" style="left:52px;top:7px;width:6px;border-top:1px dotted #808080;"></div><div class="li"></div><div class="lb" style="left:76px">HA1 + S_1075_H23</div></div><div class="row" style="top:497px"><div class="pm p"></div><div class="a" style="left:52px;top:7px;width:6px;border-top:1px dotted #808080;"></div><div class="li"></div><div class="lb" style="left:76px">HA1 + S_1075_H24</div></div><div class="row" style="top:513px"><div class="pm p"></div><div class="a" style="left:52px;top:7px;width:6px;border-top:1px dotted #808080;"></div><div class="li"></div><div class="lb" style="left:76px">HA2 + S_1075_H02</div></div><div class="row" style="top:529px"><div class="pm p"></div><div class="a" style="left:52px;top:7px;width:6px;border-top:1px dotted #808080;"></div><div class="li"></div><div class="lb" style="left:76px">HA2 + S_1075_H02</div></div><div class="row" style="top:545px"><div class="pm p"></div><div class="a" style="left:52px;top:7px;width:6px;border-top:1px dotted #808080;"></div><div class="li"></div><div class="lb" style="left:76px">HA2 + S_1075_H02</div></div><div class="row" style="top:561px"><div class="pm p"></div><div class="a" style="left:52px;top:7px;width:6px;border-top:1px dotted #808080;"></div><div class="li"></div><div class="lb" style="left:76px">HA2 + S_1075_H02</div></div><div class="row" style="top:577px"><div class="pm p"></div><div class="a" style="left:52px;top:7px;width:6px;border-top:1px dotted #808080;"></div><div class="li"></div><div class="lb" style="left:76px">HA2 + S_1075_H02</div></div><div class="row" style="top:593px"><div class="pm p"></div><div class="a" style="left:52px;top:7px;width:6px;border-top:1px dotted #808080;"></div><div class="li"></div><div class="lb" style="left:76px">HA2 + S_1075_H02</div></div><div class="row" style="top:609px"><div class="pm p"></div><div class="a" style="left:52px;top:7px;width:6px;border-top:1px dotted #808080;"></div><div class="li"></div><div class="lb" style="left:76px">HA2 + S_1075_H02</div></div><div class="row" style="top:625px"><div class="pm p"></div><div class="a" style="left:52px;top:7px;width:6px;border-top:1px dotted #808080;"></div><div class="li"></div><div class="lb" style="left:76px">HA2 + S_1075_H02</div></div><div class="row" style="top:641px"><div class="pm p"></div><div class="a" style="left:52px;top:7px;width:6px;border-top:1px dotted #808080;"></div><div class="li"></div><div class="lb" style="left:76px">HA2 + S_1075_H02</div></div><div class="row" style="top:657px"><div class="pm p"></div><div class="a" style="left:52px;top:7px;width:6px;border-top:1px dotted #808080;"></div><div class="li"></div><div class="lb" style="left:76px">HA2 + S_1075_H02</div></div></div>
<div class="a dither" style="left:1012px;top:62px;width:12px;height:670px;"></div>
<div class="a btn" style="left:1012px;top:62px;width:12px;height:13px;"></div>
<div class="a btn" style="left:1012px;top:719px;width:12px;height:13px;"></div>
<svg class="a" style="left:1015px;top:67px" width="7" height="4" viewBox="0 0 7 4"><path d="M0 4 h7 l-3.500 -4 z" fill="#000"/></svg>
<svg class="a" style="left:1015px;top:724px" width="7" height="4" viewBox="0 0 7 4"><path d="M0 0 h7 l-3.500 4 z" fill="#000"/></svg>
<div class="a btn" style="left:1012px;top:130px;width:12px;height:199px;"></div>
<div class="a dither" style="left:834px;top:732px;width:176px;height:12px;"></div>
<div class="a btn" style="left:834px;top:732px;width:12px;height:12px;"></div>
<div class="a btn" style="left:998px;top:732px;width:12px;height:12px;"></div>
<svg class="a" style="left:838px;top:735px" width="4" height="7" viewBox="0 0 4 7"><path d="M4 0 v7 l-4 -3.500 z" fill="#000"/></svg>
<svg class="a" style="left:1003px;top:735px" width="4" height="7" viewBox="0 0 4 7"><path d="M0 0 v7 l4 -3.500 z" fill="#000"/></svg>
<div class="a btn" style="left:846px;top:732px;width:131px;height:12px;"></div>
<div class="a face" style="left:1010px;top:732px;width:14px;height:12px;"></div>
<div class="a sunk" style="left:832px;top:749px;width:19px;height:17px;"></div>
<svg class="a" style="left:836px;top:751px" width="13" height="13" viewBox="0 0 13 13"><path d="M1.500 0.500 h7 l3 3 v9 h-10 z" fill="#ffffc0" stroke="#000"/><path d="M8.500 0.500 v3 h3" fill="none" stroke="#000"/></svg>
<div class="a sunk" style="left:853px;top:749px;width:174px;height:17px;"></div>
<div class="t " style="left:856px;top:751.0px;">1 Objekt(e), 0 davon angezeigt</div>
</body></html>
